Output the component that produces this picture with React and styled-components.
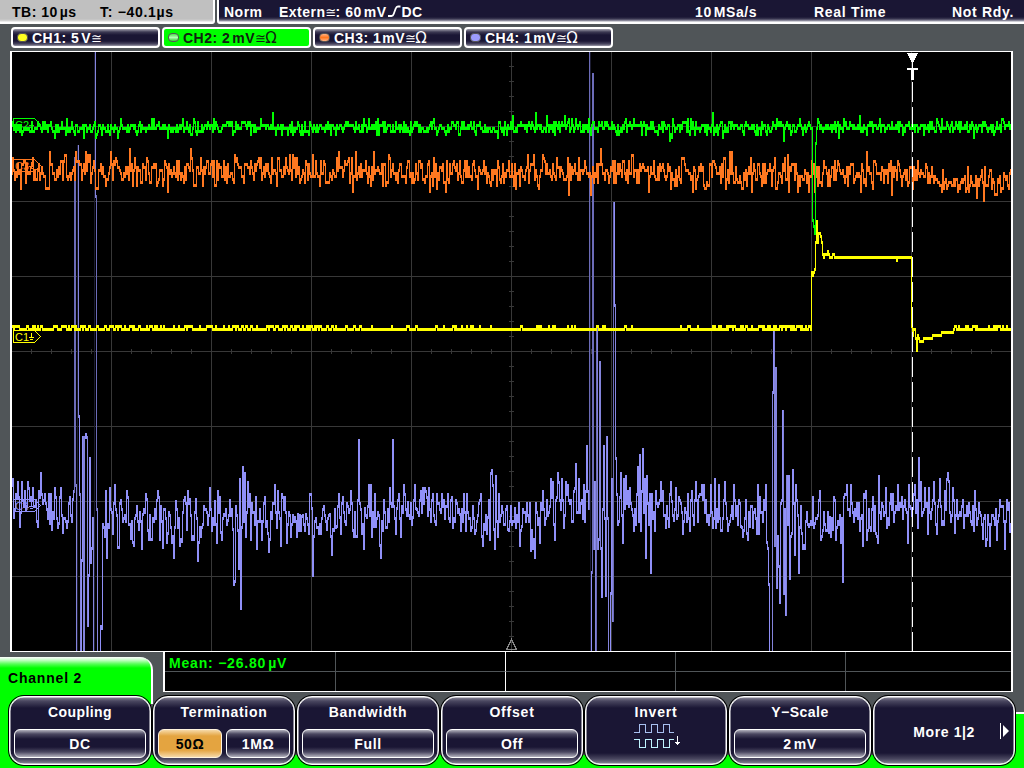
import React from 'react'
import styled, { createGlobalStyle, css } from 'styled-components';

const GlobalStyle = createGlobalStyle`
  body {
    margin: 0;
    background: #505558;
    overflow: hidden;
  }
  * { box-sizing: border-box; }
`;

const Screen = styled.div`
  width: 1024px;
  height: 768px;
  display: flex;
  flex-direction: column;
  background: #505558;
  color: #fff;
  font: bold 14px/16px "Liberation Sans", Arial, sans-serif;
  letter-spacing: 0.6px;
  white-space: nowrap;
  overflow: hidden;
`;

const TopBar = styled.header`
  display: flex;
  height: 24px;
  flex: none;
`;

const TimeBase = styled.div`
  display: grid;
  grid-template-columns: 88px 1fr;
  width: 215px;
  margin-right: 2px;
  padding: 4px 0 0 12px;
  color: #000;
  background: linear-gradient(#c0c0c0 19px, #d8d8d8 21px, #fff 22px);
  border-right: 2px solid #fff;
  border-bottom-right-radius: 3px;
`;

const Status = styled.div`
  display: grid;
  grid-template-columns: 55px 416px 119px 138px 1fr;
  flex: 1;
  padding: 4px 0 0 5px;
  background: linear-gradient(#1a1634 17px, #3c3953 19px, #a09fae 21px, #fff 22px);
  border-left: 2px solid #fff;
  border-bottom-left-radius: 3px;
`;

const Text = styled.span`
  letter-spacing: ${({ $ls }) => $ls ?? 0.6}px;
`;

const Unit = styled.span`
  margin-left: ${({ $gap }) => $gap ?? 2}px;
`;

const Sign = styled.span`
  display: inline-block;
  width: ${({ $w }) => $w || 12}px;
  font: normal ${({ $size }) => $size || 15}px/14px "DejaVu Sans", sans-serif;
  letter-spacing: 0;
`;

const Channels = styled.nav`
  display: flex;
  flex: none;
  gap: 2px;
  padding: 3px 0 0 11px;
  height: 27px;
`;

const Channel = styled.div`
  display: flex;
  align-items: center;
  width: 149px;
  height: 21px;
  padding: 0 0 0 4px;
  border: 2px solid #fff;
  border-radius: 4px;
  background: linear-gradient(#a3a2af, #3c3953 3px, #1a1634 6px, #1a1634 12px, #4a4760 15px, #9a99a8);
  ${({ $active }) => $active && css`
    color: #102010;
    background: #00ff00;
  `}
`;

const Lamp = styled.i`
  width: 11px;
  height: 9px;
  margin-right: 4px;
  border: 1px solid #555;
  border-radius: 4px;
  background: ${({ $fill }) => $fill};
`;

const Scope = styled.div`
  flex: none;
  width: 1003px;
  height: 601px;
  margin-left: 10px;
  border: solid #fff;
  border-width: 1px 2px 0 2px;
  background: #000;
  svg { display: block; }
`;

const Bottom = styled.footer`
  display: grid;
  grid-template-columns: 153px 1fr 11px;
  grid-template-rows: 40px 76px;
  height: 116px;
  flex: none;
`;

const Tab = styled.div`
  margin-top: 5px;
  padding: 13px 0 0 8px;
  color: #000;
  letter-spacing: 0.8px;
  background: linear-gradient(#fff, #c8ffc8 3px, #55ff55 7px, #00ff00 11px);
  border-right: 2px solid #fff;
  border-top-right-radius: 13px;
`;

const Measurements = styled.div`
  display: grid;
  grid-template-columns: 171px 170px 170px 170px 1fr;
  grid-template-rows: 20px 19px;
  margin-left: 10px;
  background: #000;
  border: solid #fff;
  border-width: 0 2px 1px 2px;
`;

const Cell = styled.div`
  padding: 3px 0 0 4px;
  color: #00ff00;
  letter-spacing: 0.8px;
  border-right: 1px solid ${({ $line }) => $line || '#505558'};
  border-bottom: ${({ $last }) => ($last ? 0 : 1)}px solid #505558;
`;

const Menu = styled.div`
  grid-column: 1 / 4;
  display: flex;
  gap: 2px;
  padding: 4px 0 0 9px;
  background:
    linear-gradient(#00ff00, #00ff00) 0 0 / 11px 76px no-repeat,
    linear-gradient(#00ff00, #00ff00) 0 63px / 1024px 13px no-repeat,
    linear-gradient(#fff 2px, #00ff00 2px) 1013px 20px / 11px 56px no-repeat,
    linear-gradient(90deg, #00ff00 151px, #fff 151px, #fff 153px, transparent 153px) 0 0 / 153px 12px no-repeat;
`;

const Key = styled.div`
  display: flex;
  flex-direction: column;
  align-items: center;
  width: 142px;
  height: 69px;
  padding: 7px 4px 0;
  border: 1px solid #fff;
  border-radius: 15px;
  box-shadow: 0 0 0 1px #000, inset 0 0 0 0.5px #fff;
  background: linear-gradient(#8c8b9a, #4a4760 4px, #1a1634 11px, #1a1634 56px, #4a4760 62px, #8c8b9a);
`;

const KeyTitle = styled.div`
  height: 25px;
  letter-spacing: ${({ $ls }) => $ls ?? 0.8}px;
`;

const Values = styled.div`
  display: flex;
  gap: 4px;
  width: 132px;
`;

const Value = styled.div`
  flex: 1;
  height: 29px;
  padding-top: 6px;
  text-align: center;
  border: 1.5px solid #fff;
  border-radius: 6px;
  background: linear-gradient(#b4b3be, #4a4760 4px, #1a1634 9px, #1a1634 17px, #4a4760 22px, #b4b3be);
  ${({ $selected }) => $selected && css`
    color: #000;
    border-color: #fff3dd;
    background: linear-gradient(#f6d9a8, #e4a440 6px, #e4a440 20px, #f6d9a8);
  `}
`;

const More = styled.div`
  display: flex;
  align-items: center;
  align-self: flex-end;
  gap: 25px;
  margin: 18px 0 0 0;
  span { padding-top: 2px; }
`;

// vertical resolution of the traces, in pixels
const STEP = 3;

const random = (seed) => () => {
  seed = (seed * 1664525 + 1013904223) % 4294967296;
  return seed / 4294967296;
};

const gauss = (rnd) => rnd() + rnd() + rnd() + rnd() - 2;

const snap = (y) => Math.round(y / STEP) * STEP + 1;

const CH4 = `
12:484 13:478 14:516 16:493 18:481 20:525 22:481 24:505 25:490 28:481 29:487 31:496 33:487 34:505 36:499 38:525 40:496
41:472 43:502 44:499 46:502 48:517 49:493 50:522 51:493 52:528 54:517 55:487 56:496 57:517 59:522 61:487 63:531 65:517
68:520 70:496 71:514 73:498 74:490 75:157 76:484 77:660 78:145 79:415 80:493 81:660 82:559 83:436 84:660 85:436 86:433
87:436 88:624 89:574 90:457 91:561 92:547 93:517 94:660 95:0 96:195 97:508 98:660 99:660 100:660 101:625 102:627
103:523 104:526 105:535 106:490 107:556 109:526 110:487 111:508 113:532 115:484 116:508 118:546 119:546 120:502 122:508
123:520 126:520 127:490 129:523 131:537 134:544 137:505 139:528 142:547 143:513 146:493 147:498 149:538 152:538 154:520
157:499 159:496 163:546 164:508 167:541 169:511 171:526 174:556 176:500 177:508 180:544 182:540 184:499 187:528 188:490
190:498 192:538 194:538 196:498 198:559 201:535 204:505 206:508 208:523 210:487 212:529 215:500 217:541 218:490 220:496
221:531 224:513 226:508 228:519 230:499 233:528 234:583 235:580 236:505 238:529 239:567 240:478 241:607 243:466 244:520
245:472 246:535 248:481 250:493 251:538 252:502 255:523 256:496 257:547 259:520 260:508 262:538 265:496 266:525 269:550
271:511 273:502 275:484 277:526 278:490 281:544 282:493 284:508 285:496 287:541 289:511 291:535 295:516 297:535 298:513
302:515 306:513 308:523 310:493 312:507 313:574 315:520 317:526 321:532 322:517 324:505 327:528 330:513 332:553 333:528
335:508 337:525 339:493 340:516 341:532 343:496 345:520 349:511 352:502 354:535 357:535 358:499 359:439 360:502 361:508
364:547 365:507 367:516 369:484 371:484 372:535 374:525 375:493 376:525 378:511 380:544 381:556 384:499 386:526 389:520
390:487 392:505 393:439 394:505 396:532 397:507 399:493 401:535 404:484 406:508 408:501 409:514 412:523 413:516 415:484
416:507 420:499 423:487 426:490 428:514 429:487 431:520 433:493 435:520 437:493 440:508 444:499 445:517 448:493 450:520
451:499 454:517 456:499 458:511 460:513 463:520 464:493 466:529 467:493 469:517 471:529 473:505 476:529 478:514 480:499
481:493 482:535 484:523 485:528 486:514 488:516 489:499 490:538 491:472 492:469 493:484 494:528 495:547 496:475 497:520
498:535 499:493 500:520 502:505 504:523 506:508 508:528 509:529 511:505 513:520 515:507 518:520 519:502 520:544 522:525
525:511 527:502 528:514 530:502 531:549 532:529 533:547 535:556 536:502 538:523 540:541 541:502 543:490 545:523 547:499
549:511 551:478 553:481 555:538 556:499 558:472 560:499 561:508 562:478 564:526 566:481 568:484 571:499 573:520 574:490
576:463 577:511 579:478 582:499 583:517 584:484 585:520 587:445 588:490 589:507 590:0 591:660 592:571 593:73 594:547
595:481 596:660 597:325 598:547 599:538 600:361 601:547 602:595 603:508 604:445 605:517 606:594 607:436 608:517 609:660
610:660 611:592 612:478 613:619 614:202 615:304 616:457 617:493 618:523 619:520 620:496 621:472 623:541 624:478 625:507
626:475 628:490 630:487 631:502 633:514 634:529 636:523 637:493 638:466 639:520 640:454 641:529 643:448 644:511 645:478
646:556 647:475 648:502 649:523 650:493 651:571 652:493 655:529 656:490 659:502 661:481 663:490 664:514 667:505 669:525
671:481 672:500 673:514 674:519 676:487 677:517 679:496 681:502 683:532 685:507 687:520 688:493 690:529 692:490 694:523
696:481 698:520 699:495 701:493 702:484 703:498 706:499 708:514 709:523 711:484 712:511 714:517 715:478 716:526 718:520
719:484 721:529 723:517 725:481 726:502 728:529 730:520 732:505 734:484 736:514 737:505 738:523 739:499 741:525 743:535
745:517 746:499 747:532 749:511 750:525 751:505 753:526 755:508 757:532 758:484 759:532 760:496 763:520 764:499 765:508
766:484 767:541 768:547 769:583 770:660 771:660 772:660 773:391 774:327 775:544 776:367 777:586 778:535 779:565 780:601
781:502 782:499 783:410 784:592 785:508 786:613 787:475 788:523 789:475 790:577 791:535 792:532 793:469 795:553 796:484
797:499 799:571 801:505 803:547 805:547 807:511 809:525 811:520 813:496 815:522 818:514 820:490 821:538 823:529 824:511
826:529 828:511 829:531 830:516 831:535 833:528 835:499 836:538 839:523 841:541 842:517 843:580 844:496 846:493 847:484
849:508 851:484 852:502 857:502 859:502 860:529 862:514 863:544 864:493 866:490 867:538 869:508 871:529 872:508 874:529
876:532 878:541 879:475 881:517 883:505 885:511 886:487 887:526 889:523 891:493 893:493 894:520 898:484 900:502 902:496
903:517 905:499 908:541 909:484 911:507 913:507 915:484 917:499 918:526 919:457 920:499 921:481 923:511 925:487 928:532
929:487 931:517 933:499 934:481 937:532 938:505 940:478 942:523 944:523 945:490 947:478 948:472 949:480 951:520 953:487
955:531 957:499 959:514 961:514 963:499 965:514 967:505 969:502 971:520 974:529 975:490 977:523 979:502 981:514 983:537
985:514 987:538 988:514 990:544 992:514 995:523 997:538 999:514 1001:505 1003:505 1005:547 1007:499 1009:502 1010:530 1012:541`;

// CH4: measured vertices, short ripple in the gaps
const purpleTrace = () => {
  const points = CH4.trim().split(/\s+/).map((p) => p.split(':').map(Number));
  const rnd = random(5);
  const ys = {};
  points.forEach(([x, y], i) => {
    ys[x - 1] = y;
    const next = points[i + 1];
    if (!next) return;
    for (let k = x + 1; k < next[0]; k++) {
      ys[k - 1] = snap(512 + ((y + next[1]) / 2 - 512) * 0.6 + gauss(rnd) * 15);
    }
  });
  return ys;
};

const greenTrace = () => {
  const rnd = random(77);
  const ys = {};
  for (let x = 11; x < 1012; x++) {
    ys[x] = snap(125 + gauss(rnd) * (rnd() < 0.12 ? 10 : 5.5));
  }
  return { ...ys, 512: 115, 811: 127, 812: 219, 813: 225, 814: 232, 815: 142, 816: 127, 817: 118 };
};

const orangeTrace = () => {
  const rnd = random(1234);
  const ys = {};
  let last = 0;
  for (let x = 11; x < 1012; x++) {
    if (rnd() < 0.9) last = gauss(rnd) * 14;
    const base = x < 930 ? 168 + (x / 930) * 4 : 179;
    ys[x] = snap(Math.max(150, Math.min(196, base + last)));
  }
  return { ...ys, 129: 148, 167: 190, 190: 148, 600: 148, 866: 151, 891: 193, 983: 199 };
};

const yellowTrace = () => {
  const rnd = random(42);
  const ys = {};
  let high = false;
  for (let x = 11; x < 1012; x++) {
    const calm = (x > 162 && x < 178) || (x > 340 && x < 720);
    high = high ? rnd() < (calm ? 0.3 : 0.5) : rnd() < (calm ? 0.16 : 0.34);
    ys[x] = high ? 325 : 328;
  }
  const pulse = [[811, 271], [812, 274], [813, 271], [814, 268], [815, 241], [816, 220], [817, 241], [818, 232],
    [820, 235], [821, 241], [822, 253], [823, 256], [824, 253], [827, 250], [828, 253], [829, 256], [832, 253],
    [834, 256], [896, 259], [897, 256], [911, 325], [912, 334], [913, 328], [914, 328], [915, 337], [916, 349],
    [917, 334], [918, 337], [919, 340], [923, 337], [932, 334], [941, 331], [953, 328]];
  pulse.forEach(([x, y], i) => {
    const end = pulse[i + 1] ? pulse[i + 1][0] : x + 1;
    for (let k = x; k < end; k++) ys[k] = y;
  });
  return ys;
};

// fast edges are drawn darker, like on a phosphor screen
const Trace = ({ ys, shades }) => {
  const paths = shades.map(() => '');
  for (let x = 12; x < 1012; x++) {
    const a = ys[x - 1] ?? ys[x];
    const b = ys[x];
    const top = Math.min(a, b);
    const size = Math.abs(a - b);
    let i = 0;
    while (i < shades.length - 1 && size > shades[i].max) i++;
    paths[i] += `M${x} ${top}h1V${top + size + STEP}h-1z`;
  }
  return shades.map((s, i) => <path key={s.color} d={paths[i]} fill={s.color} />).reverse();
};

const single = (color) => [{ color }];

const purple = [
  { color: '#9090f8', max: 130 },
  { color: '#8484dc', max: 290 },
  { color: '#6c6cb8', max: 512 },
  { color: '#1c1c32' },
];

const Marker = ({ y, color, name }) => (
  <g stroke={color} fill="none">
    <path d={`M13.500 ${y - 6.5}h21l6 6l-6 6h-21z`} />
    <text x="15" y={y + 3.5} fill={color} stroke="none" fontSize="11" fontWeight="400"
      fontFamily="Liberation Sans" letterSpacing="0">{name}</text>
    <path d={`M31.500 ${y - 4}v5M29 ${y + 0.5}h5M30 ${y + 2.5}h3`} />
  </g>
);

const Grid = () => {
  let lines = '';
  for (let i = 1; i < 10; i++) lines += `M${11.5 + i * 100} 52V651`;
  for (let i = 1; i < 8; i++) lines += `M12 ${51.5 + i * 75}H1012`;
  for (let x = 31.5; x < 1012; x += 20) lines += `M${x} 349v5`;
  for (let y = 66.5; y < 650; y += 15) lines += `M509 ${y}h5`;
  return <path d={lines} stroke="#383838" />;
};

const Display = () => (
  <Scope>
    <svg width="999" height="600" viewBox="12 52 999 600" shapeRendering="crispEdges">
      <Grid />
      <path d="M511.500 639.500l-5 10h10z" stroke="#888" fill="none" />
      <Trace ys={purpleTrace()} shades={purple} />
      <Trace ys={orangeTrace()} shades={single('#ff7820')} />
      <Trace ys={greenTrace()} shades={single('#00ff00')} />
      <Trace ys={yellowTrace()} shades={single('#ffff00')} />
      <Marker y={125} color="#00ff00" name="C2" />
      <Marker y={166} color="#ff7820" name="C3" />
      <Marker y={337} color="#ffff00" name="C1" />
      <Marker y={506} color="#9090f8" name="C4" />
      <path d="M912.500 82V652" stroke="#fff" strokeDasharray="20 5" />
      <path d="M907 53h11l-5 10h-1zM907 68h11v2h-4v10h-3v-10h-4zM912 62h1v7h-1z" fill="#fff" />
      <path d="M12 651.500H1012" stroke="#fff" />
    </svg>
  </Scope>
);

const Edge = () => (
  <svg width="15" height="12" viewBox="0 0 15 12">
    <path d="M1 11h3.500q1.500 0 2.200-2l2-5.500q0.800-2 2.300-2h2.500" fill="none" stroke="#fff" strokeWidth="1.800" />
  </svg>
);

const InvertIcon = styled.svg`
  margin: -5px 0 0 4px;
`;

const InvertDrawing = () => (
  <InvertIcon width="48" height="26" viewBox="0 0 48 26" fill="none" shapeRendering="crispEdges">
    <path d="M0 8.500h5.500v-8h6v8h6v-8h6v8h6v-8h6v8h4" stroke="#a8c0f0" />
    <path d="M0 15.500h5.500v8h6v-8h6v8h6v-8h6v8h6v-8h4" stroke="#c0f4ff" />
    <path d="M43.500 12v9M41 18.500h5M42 19.500h3" stroke="#fff" />
  </InvertIcon>
);

const Approx = () => <Sign $w={10} $size={13}>≅</Sign>;

const App = () => {
  return (
    <Screen>
      <GlobalStyle />
      <TopBar>
        <TimeBase>
          <Text $ls={0.5}>TB: 10<Unit>µs</Unit></Text>
          <Text $ls={0.7}>T: −40.1µs</Text>
        </TimeBase>
        <Status>
          <Text $ls={0.5}>Norm</Text>
          <Text $ls={0.5}>Extern<Approx />: 60<Unit>mV</Unit><Edge />DC</Text>
          <Text>10<Unit>MSa/s</Unit></Text>
          <Text $ls={0.7}>Real Time</Text>
          <Text $ls={0.7}>Not Rdy.</Text>
        </Status>
      </TopBar>
      <Channels>
        <Channel>
          <Lamp $fill="#ffff20" />
          <Text $ls={0.5}>CH1: 5<Unit>V</Unit><Approx /></Text>
        </Channel>
        <Channel $active>
          <Lamp $fill="linear-gradient(#50e050, #b0ffb0, #30d030)" />
          <Text $ls={0.5}>CH2: 2<Unit>mV</Unit><Approx /><Sign>Ω</Sign></Text>
        </Channel>
        <Channel>
          <Lamp $fill="linear-gradient(#ffb080, #ff7820, #ffb080)" />
          <Text $ls={0.5}>CH3: 1<Unit $gap={1}>mV</Unit><Approx /><Sign>Ω</Sign></Text>
        </Channel>
        <Channel>
          <Lamp $fill="#9c9cff" />
          <Text $ls={0.5}>CH4: 1<Unit $gap={1}>mV</Unit><Approx /><Sign>Ω</Sign></Text>
        </Channel>
      </Channels>
      <Display />
      <Bottom>
        <Tab>Channel 2</Tab>
        <Measurements>
          <Cell>Mean: −26.80<Unit>µV</Unit></Cell>
          <Cell $line="#fff" />
          <Cell />
          <Cell />
          <Cell $line="#000" />
          <Cell $last />
          <Cell $last $line="#fff" />
          <Cell $last />
          <Cell $last />
          <Cell $last $line="#000" />
        </Measurements>
        <div />
        <Menu>
          <Key>
            <KeyTitle $ls={0.4}>Coupling</KeyTitle>
            <Values><Value>DC</Value></Values>
          </Key>
          <Key>
            <KeyTitle $ls={0.7}>Termination</KeyTitle>
            <Values>
              <Value $selected>50Ω</Value>
              <Value>1MΩ</Value>
            </Values>
          </Key>
          <Key>
            <KeyTitle>Bandwidth</KeyTitle>
            <Values><Value>Full</Value></Values>
          </Key>
          <Key>
            <KeyTitle>Offset</KeyTitle>
            <Values><Value>Off</Value></Values>
          </Key>
          <Key>
            <KeyTitle>Invert</KeyTitle>
            <InvertDrawing />
          </Key>
          <Key>
            <KeyTitle $ls={0.5}>Y−Scale</KeyTitle>
            <Values><Value>2<Unit>mV</Unit></Value></Values>
          </Key>
          <Key>
            <More>
              <span>More 1|2</span>
              <svg width="10" height="16" viewBox="0 0 10 16">
                <path d="M0.500 0v16" stroke="#fff" />
                <path d="M3 2l6 6-6 6z" fill="#fff" />
              </svg>
            </More>
          </Key>
        </Menu>
      </Bottom>
    </Screen>
  )
}

export default App
